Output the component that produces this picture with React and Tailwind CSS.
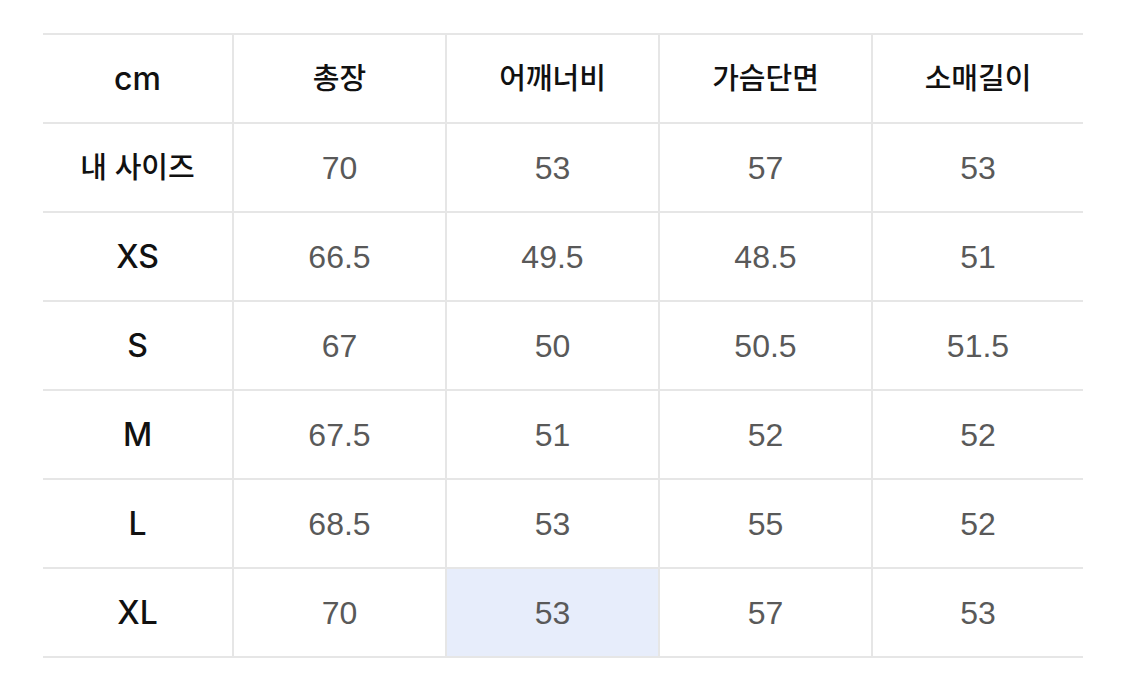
import React from 'react';

const headers = ['총장', '어깨너비', '가슴단면', '소매길이'];

const rows = [
    { label: '내 사이즈', values: ['70', '53', '57', '53'] },
    { label: 'XS', values: ['66.5', '49.5', '48.5', '51'] },
    { label: 'S', values: ['67', '50', '50.5', '51.5'] },
    { label: 'M', values: ['67.5', '51', '52', '52'] },
    { label: 'L', values: ['68.5', '53', '55', '52'] },
    { label: 'XL', values: ['70', '53', '57', '53'], highlight: 1 },
];

const valueFont = { fontFamily: '"Liberation Sans", "Noto Sans CJK KR", sans-serif' };
const labelFont = { fontFamily: 'Inter, "Noto Sans CJK KR", sans-serif' };

const App = () => {
    return (
        <div className="min-h-screen bg-white pt-[33px] pl-[43px]" style={valueFont}>
            <div className="w-[1040px] border-t-2 border-[#e6e6e6]">
                {/* header */}
                <div className="flex h-[89px] border-b-2 border-[#e6e6e6]">
                    <div className="w-[189px] flex items-center justify-center text-[32px] font-medium text-[#111]" style={labelFont}>cm</div>
                    {headers.map((h, i) => (
                        <div
                            key={h}
                            className={`${i === 3 ? 'w-[212px]' : 'w-[213px]'} border-l-2 border-[#e6e6e6] flex items-center justify-center text-[29px] font-medium text-[#111]`}
                            style={labelFont}
                        >
                            {h}
                        </div>
                    ))}
                </div>

                {rows.map((r) => (
                    <div key={r.label} className="flex h-[89px] border-b-2 border-[#e6e6e6]">
                        <div
                            className={`w-[189px] flex items-center justify-center font-medium text-[#111] ${r.label.length > 2 ? 'text-[29px]' : 'text-[32px]'}`}
                            style={labelFont}
                        >
                            {r.label}
                        </div>
                        {r.values.map((v, i) => (
                            <div
                                key={i}
                                className={`${i === 3 ? 'w-[212px]' : 'w-[213px]'} border-l-2 border-[#e6e6e6] flex items-center justify-center text-[32px] text-[#595959] ${r.highlight === i ? 'bg-[#e7edfb]' : ''}`}
                            >
                                {v}
                            </div>
                        ))}
                    </div>
                ))}
            </div>
        </div>
    );
};

export default App;
